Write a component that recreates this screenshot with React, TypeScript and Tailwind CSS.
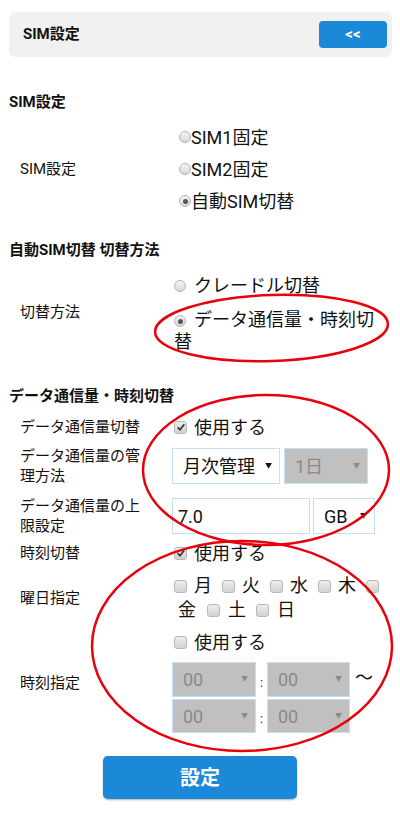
import React from "react";

const font = { fontFamily: "Roboto, 'Noto Sans CJK JP', sans-serif" };

function Radio({ checked = false }: { checked?: boolean }) {
  return (
    <span className="inline-flex w-[12px] h-[12px] rounded-full border border-[#b5b5b5] bg-gradient-to-b from-[#f4f4f4] to-[#d8d8d8] items-center justify-center align-middle shrink-0">
      {checked && <span className="w-[5px] h-[5px] rounded-full bg-[#555]" />}
    </span>
  );
}

function Check({ checked = false }: { checked?: boolean }) {
  return (
    <span className="inline-flex w-[13px] h-[13px] rounded-[3px] border border-[#b8b8b8] bg-gradient-to-b from-[#ededed] to-[#d2d2d2] items-center justify-center align-middle shrink-0">
      {checked && (
        <svg viewBox="0 0 12 12" className="w-[10px] h-[10px]">
          <path d="M2 6.5 L4.8 9.2 L10 2.8" fill="none" stroke="#333" strokeWidth="2" />
        </svg>
      )}
    </span>
  );
}

function Select({
  w,
  h,
  text,
  disabled = false,
}: {
  w: string;
  h: string;
  text: string;
  disabled?: boolean;
}) {
  return (
    <div
      className={`${w} ${h} flex items-center justify-between border border-[#c5e0f6] pl-[10px] pr-[7px] text-[18px] ${
        disabled ? "bg-[#c0c0c0] text-[#8a8a8a]" : "bg-white text-[#111]"
      }`}
    >
      <span>{text}</span>
      <span className={`text-[7px] ${disabled ? "text-[#8a8a8a]" : "text-[#111]"}`}>▼</span>
    </div>
  );
}

function Row({
  label,
  children,
  className = "",
  labelClass = "items-center",
}: {
  label?: string;
  children: React.ReactNode;
  className?: string;
  labelClass?: string;
}) {
  return (
    <div className={`flex ${className}`}>
      <div className={`w-[163px] pl-[11px] pr-[22px] flex ${labelClass} text-[15px] leading-[20px] text-[#111]`}>
        {label}
      </div>
      <div className="flex-1">{children}</div>
    </div>
  );
}

export default function App() {
  const days1 = ["月", "火", "水", "木"];
  return (
    <div className="relative w-[400px] min-h-[821px] bg-white px-[9px] pt-[12px] text-[#111]" style={font}>
      {/* Header */}
      <div className="h-[45px] mr-[-1px] rounded-md bg-[#f1f1f1] flex items-center justify-between pl-[14px] pr-[5px]">
        <span className="text-[15px] font-bold">SIM設定</span>
        <button className="w-[68px] h-[27px] rounded-[4px] bg-[#1b88d8] text-white text-[15px] font-bold">
          &lt;&lt;
        </button>
      </div>

      {/* SIM設定 */}
      <h2 className="mt-[35px] text-[15px] leading-[20px] font-bold">SIM設定</h2>
      <Row label="SIM設定" className="mt-[9px]">
        <div className="pl-[7px] text-[18px]">
          <div className="h-[32px] flex items-center">
            <Radio />
            <span>SIM1固定</span>
          </div>
          <div className="h-[32px] flex items-center">
            <Radio />
            <span>SIM2固定</span>
          </div>
          <div className="h-[32px] flex items-center">
            <Radio checked />
            <span>自動SIM切替</span>
          </div>
        </div>
      </Row>

      {/* 切替方法 */}
      <h2 className="mt-[23px] text-[15px] leading-[20px] font-bold">自動SIM切替 切替方法</h2>
      <Row label="切替方法" className="mt-[10px]">
        <div className="pl-[2px] text-[18px] w-[210px]">
          <div className="h-[31px] flex items-center gap-[8px]">
            <Radio />
            <span>クレードル切替</span>
          </div>
          <div className="leading-[22px] mt-[8px]">
            <Radio checked />
            <span className="ml-[8px]">データ通信量・時刻切替</span>
          </div>
        </div>
      </Row>

      {/* データ通信量・時刻切替 */}
      <h2 className="mt-[33px] text-[15px] leading-[20px] font-bold">データ通信量・時刻切替</h2>
      <Row label="データ通信量切替" className="mt-[6px]">
        <div className="h-[30px] pl-[2px] flex items-center gap-[7px] text-[18px]">
          <Check checked />
          <span>使用する</span>
        </div>
      </Row>
      <Row label="データ通信量の管理方法" className="mt-[4px] h-[40px]">
        <div className="h-[40px] flex items-center gap-[4px]">
          <Select w="w-[108px]" h="h-[36px]" text="月次管理" />
          <Select w="w-[84px]" h="h-[36px]" text="1日" disabled />
        </div>
      </Row>
      <Row label="データ通信量の上限設定" className="mt-[10px] h-[40px]">
        <div className="h-[40px] flex items-center gap-[3px]">
          <div className="w-[138px] h-[36px] border border-[#c5e0f6] flex items-center pl-[5px] text-[18px]">7.0</div>
          <Select w="w-[62px]" h="h-[36px]" text="GB" />
        </div>
      </Row>
      <Row label="時刻切替" className="mt-[2px]">
        <div className="h-[30px] pl-[2px] flex items-center gap-[7px] text-[18px]">
          <Check checked />
          <span>使用する</span>
        </div>
      </Row>
      <Row label="曜日指定" className="mt-[6px]">
        <div className="pl-[2px] text-[18px] leading-[24px]">
          <div className="flex items-center">
            {days1.map((d) => (
              <span key={d} className="flex items-center mr-[10px]">
                <Check />
                <span className="ml-[7px]">{d}</span>
              </span>
            ))}
            <Check />
          </div>
          <div className="flex items-center pl-[4px]">
            <span className="mr-[11px]">金</span>
            <Check />
            <span className="ml-[8px] mr-[10px]">土</span>
            <Check />
            <span className="ml-[8px]">日</span>
          </div>
        </div>
      </Row>
      <Row className="mt-[5px]">
        <div className="h-[30px] pl-[2px] flex items-center gap-[7px] text-[18px]">
          <Check />
          <span>使用する</span>
        </div>
      </Row>
      <Row label="時刻指定" className="mt-[5px]" labelClass="items-start pt-[11px]">
        <div className="flex flex-col gap-[2px]">
          <div className="flex items-center">
            <Select w="w-[84px]" h="h-[35px]" text="00" disabled />
            <span className="w-[11px] text-center text-[12px] mt-[6px]">:</span>
            <Select w="w-[83px]" h="h-[35px]" text="00" disabled />
            <span className="ml-[5px] text-[18px] -mt-[4px]">〜</span>
          </div>
          <div className="flex items-center">
            <Select w="w-[84px]" h="h-[34px]" text="00" disabled />
            <span className="w-[11px] text-center text-[12px] mt-[6px]">:</span>
            <Select w="w-[83px]" h="h-[34px]" text="00" disabled />
          </div>
        </div>
      </Row>

      <div className="flex justify-center mt-[23px]">
        <button className="w-[194px] h-[43px] rounded-[5px] bg-[#1b88d8] text-white text-[20px] font-bold shadow-[0_1px_2px_rgba(0,0,0,0.3)]">
          設定
        </button>
      </div>

      {/* annotation ellipses */}
      <svg className="absolute inset-0 pointer-events-none" width="400" height="821" viewBox="0 0 400 821">
        <ellipse cx="271.5" cy="328" rx="116.5" ry="33" fill="none" stroke="#e8000b" strokeWidth="2.5" transform="rotate(-2 271.5 328)" />
        <ellipse cx="266" cy="470" rx="123" ry="75" fill="none" stroke="#e8000b" strokeWidth="2.5" />
        <ellipse cx="242" cy="646" rx="150" ry="105" fill="none" stroke="#e8000b" strokeWidth="2.5" />
      </svg>
    </div>
  );
}
